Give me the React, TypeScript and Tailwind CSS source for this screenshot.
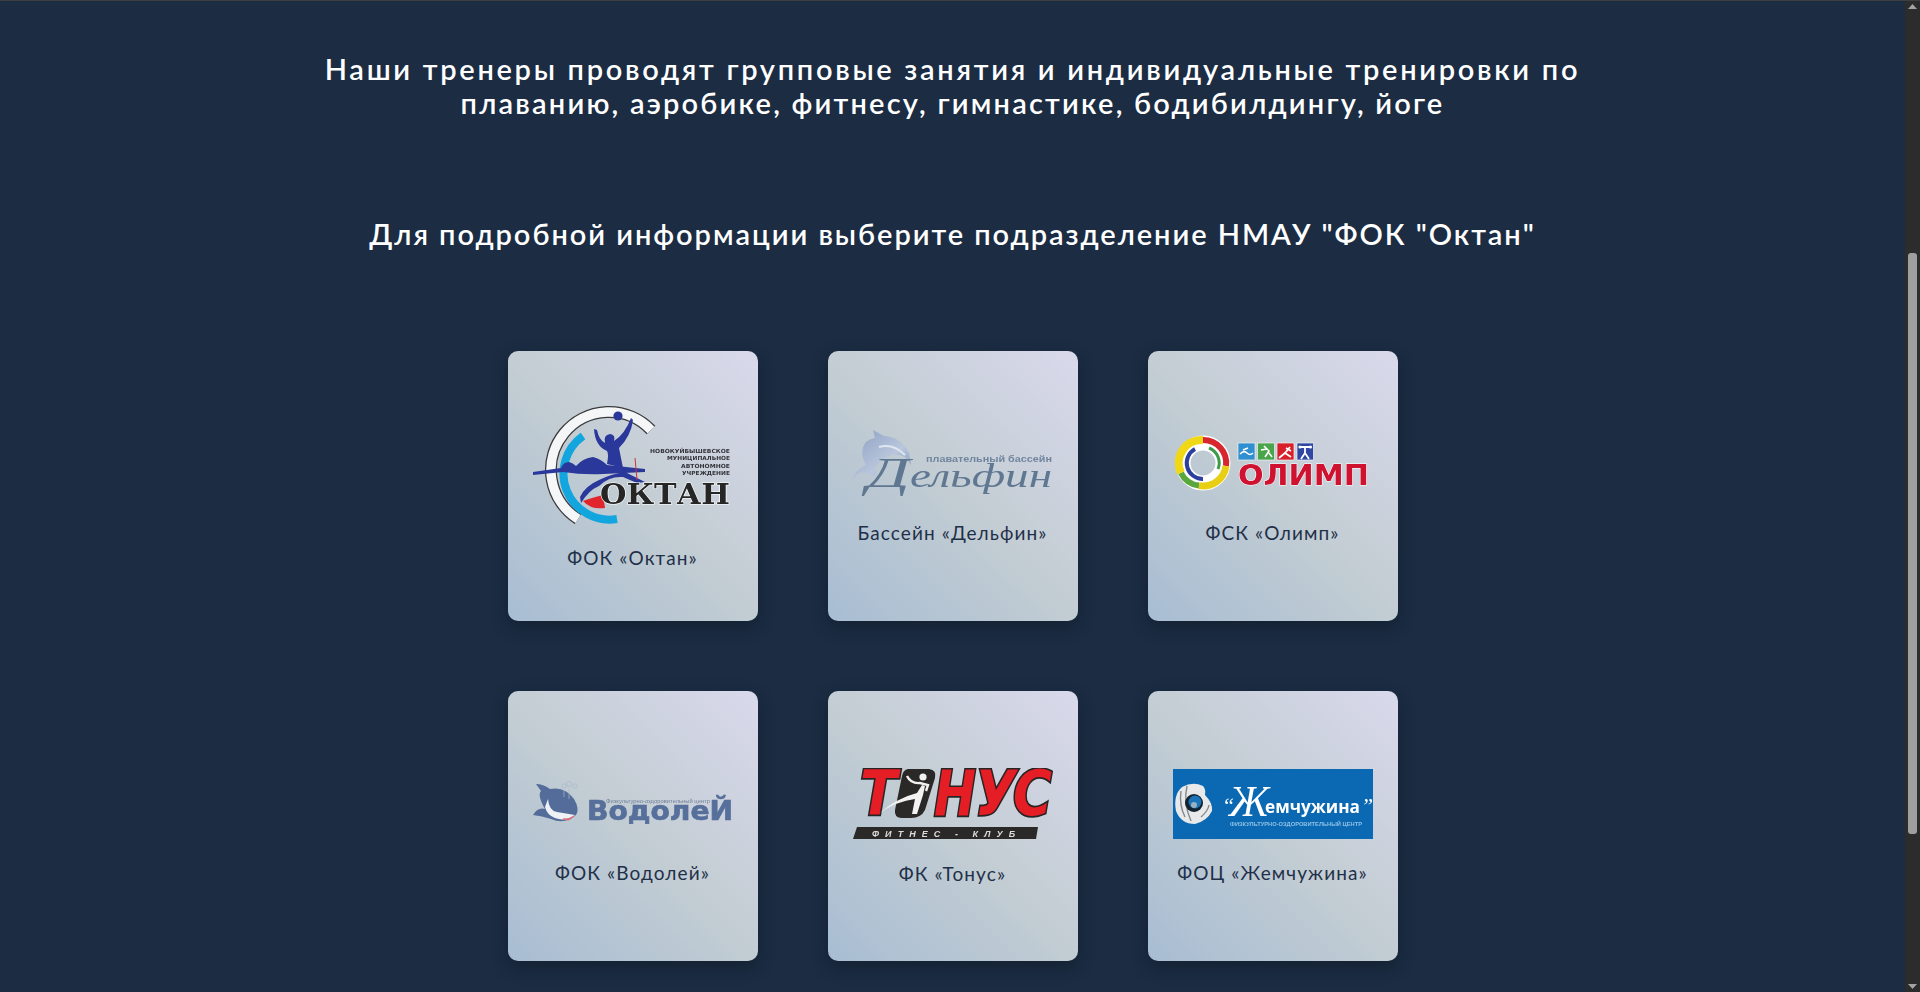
import React from 'react';

// Логотипы подразделений (в оригинале это картинки, здесь нарисованы в svg)
const LogoOktan = () => (
  <svg viewBox="0 0 200 120" className="w-[200px] h-[120px]">
    <path d="M45 115 A58 58 0 1 1 118 26" fill="none" stroke="#3a3a3a" strokeWidth="12" />
    <path d="M45 115 A58 58 0 1 1 118 26" fill="none" stroke="#f4f6f8" strokeWidth="9.5" />
    <path d="M50 32 A46 46 0 0 0 84 115" fill="none" stroke="#12a5de" strokeWidth="8" />
    <path d="M50 97 Q58 94 70 91 L72 104 Q58 106 50 97Z" fill="#e0262c" />
    <circle cx="85" cy="12" r="4.6" fill="#2b389b" />
    <path d="M0 68 L28 64 Q30 58 36 58 Q40 59 43 62 Q50 54 60 53 Q68 55 74 61 L112 65 L112 68 L70 70 Q50 71 30 68 L0 71Z" fill="#2b389b" />
    <path d="M61 25 L64 26 Q66 36 72 39 Q70 31 77 30 Q83 31 81 37 Q92 30 98 14 L100 16 Q98 32 86 44 L90 64 L74 60 Q76 50 74 47 Q62 42 61 25Z" fill="#2b389b" />
    <path d="M92 68 L112 78 L104 79 L90 73 Q76 72 66 82 Q56 86 48 99 L47 93 Q52 82 66 76 Q78 70 92 68Z" fill="#2b389b" />
    <path d="M102 54 L104 76" stroke="#d0303a" strokeWidth="1" />
    <g fontFamily="DejaVu Sans, sans-serif" fontWeight="700" fontSize="5.6" fill="#33333a" textAnchor="end">
      <text x="197" y="48.5" textLength="80" lengthAdjust="spacingAndGlyphs">НОВОКУЙБЫШЕВСКОЕ</text>
      <text x="197" y="56" textLength="63" lengthAdjust="spacingAndGlyphs">МУНИЦИПАЛЬНОЕ</text>
      <text x="197" y="63.5" textLength="49" lengthAdjust="spacingAndGlyphs">АВТОНОМНОЕ</text>
      <text x="197" y="71" textLength="48" lengthAdjust="spacingAndGlyphs">УЧРЕЖДЕНИЕ</text>
    </g>
    <text x="67" y="100" textLength="130" lengthAdjust="spacingAndGlyphs" fontFamily="DejaVu Serif, serif" fontWeight="700" fontSize="27.5" fill="#262626" stroke="#ffffff" strokeWidth="1.2" paintOrder="stroke">ОКТАН</text>
  </svg>
);

const LogoDelfin = () => (
  <svg viewBox="0 0 200 70" className="w-[200px] h-[70px]">
    <defs>
      <linearGradient id="dolphin" x1="0" y1="0" x2="1" y2="1">
        <stop offset="0" stopColor="#8b9fc2" />
        <stop offset="0.6" stopColor="#b9c6dc" />
        <stop offset="1" stopColor="#8295b8" />
      </linearGradient>
    </defs>
    <path d="M20 1 L31 7 Q48 8 56 24 L58 36 L52 28 Q44 24 36 27 Q26 31 22 40 Q26 44 20 47 Q12 42 6 44 L0 50 Q3 40 13 36 Q6 24 12 14 Q16 10 22 9Z" fill="url(#dolphin)" />
    <path d="M26 18 Q40 14 52 26" fill="none" stroke="#dfe6f0" strokeWidth="2" />
    <text x="73" y="33" textLength="126" lengthAdjust="spacingAndGlyphs" fontFamily="Liberation Sans, sans-serif" fontWeight="700" fontSize="8.5" fill="#71859f">плавательный бассейн</text>
    <g fontFamily="Liberation Serif, serif" fontStyle="italic" fill="#5f7791">
      <text x="14" y="58" textLength="43" lengthAdjust="spacingAndGlyphs" fontSize="42">Д</text>
      <text x="57" y="58" textLength="142" lengthAdjust="spacingAndGlyphs" fontSize="33">ельфин</text>
    </g>
  </svg>
);

const LogoOlimp = () => (
  <svg viewBox="0 0 200 70" className="w-[200px] h-[70px]">
    <circle cx="30" cy="34" r="20" fill="none" stroke="#ffffff" strokeWidth="15" />
    <path d="M8 44 A23 23 0 0 1 30 11" fill="none" stroke="#f1d816" strokeWidth="8" />
    <path d="M30 11 A23 23 0 0 1 53 37" fill="none" stroke="#d8262e" strokeWidth="6" />
    <path d="M53 37 A23 23 0 0 1 26 56.6" fill="none" stroke="#e9cf14" strokeWidth="7" />
    <path d="M26 56.6 A23 23 0 0 1 8 44" fill="none" stroke="#5aa83c" strokeWidth="6" />
    <path d="M22 20 A16 16 0 0 0 30 50" fill="none" stroke="#2c3f9f" strokeWidth="4" />
    <path d="M36 19 A16 16 0 0 1 45 40" fill="none" stroke="#3c9a48" strokeWidth="3" />
    <g stroke="#eef2f6" strokeWidth="0.7">
      <rect x="65" y="14" width="17" height="17" fill="#2f8fd0" />
      <rect x="84.5" y="14" width="17" height="17" fill="#4aa54a" />
      <rect x="104" y="14" width="17" height="17" fill="#d9202a" />
      <rect x="124" y="14" width="16.5" height="17" fill="#2f47a3" />
    </g>
    <path d="M67 25 Q71 21 74 24 T80 24 M70 21 L75 19" stroke="#fff" strokeWidth="1.6" fill="none" />
    <path d="M91 17 L96 22 L92 28 M88 21 L94 20 M96 24 L99 28" stroke="#fff" strokeWidth="1.6" fill="none" />
    <path d="M106 29 L112 24 L117 18 M112 24 L118 28 M113 19 L118 22" stroke="#fff" strokeWidth="1.8" fill="none" />
    <path d="M126 18 L138 18 M132 18 L132 24 L128 30 M132 24 L136 30" stroke="#fff" strokeWidth="1.8" fill="none" />
    <circle cx="127" cy="18" r="1.6" fill="#fff" />
    <circle cx="137.5" cy="18" r="1.6" fill="#fff" />
    <text x="65" y="56" textLength="131" lengthAdjust="spacingAndGlyphs" fontFamily="DejaVu Sans, sans-serif" fontWeight="700" fontSize="29" fill="#cf1230" stroke="#ffffff" strokeWidth="1" paintOrder="stroke">ОЛИМП</text>
  </svg>
);

const LogoVodoley = () => (
  <svg viewBox="0 0 200 70" className="w-[200px] h-[70px]">
    <path d="M3 15 Q10 15 17 20 Q32 17 41 30 Q47 40 43 46 Q32 56 18 50 Q9 47 0 46 Q5 38 12 40 Q4 26 8 22Z" fill="#536c99" />
    <path d="M12 38 Q14 46 22 49 Q32 53 42 46 L24 43 Q16 42 15 30Z" fill="#eef1f5" />
    <path d="M30 50 Q36 51 41 47 L36 51Z" fill="#e0707c" stroke="#e0707c" />
    <g fill="none" stroke="#aab7cd" strokeWidth="0.7">
      <circle cx="31" cy="17" r="2.2" />
      <circle cx="36" cy="15" r="2.6" />
      <circle cx="42" cy="17" r="2.2" />
      <path d="M31 28 L31 21 M36 30 L36 20" />
    </g>
    <text x="73" y="34" textLength="104" lengthAdjust="spacingAndGlyphs" fontFamily="Liberation Sans, sans-serif" fontSize="4.6" fill="#6f7f9a">Физкультурно-оздоровительный центр</text>
    <text x="54" y="51" textLength="146" lengthAdjust="spacingAndGlyphs" fontFamily="DejaVu Sans, sans-serif" fontWeight="700" fontSize="27" fill="#566f9b" stroke="#566f9b" strokeWidth="0.7">ВодолеЙ</text>
  </svg>
);

const LogoTonus = () => (
  <svg viewBox="0 0 200 72" className="w-[200px] h-[72px]">
    <g fontFamily="DejaVu Sans, sans-serif" fontWeight="700" fontStyle="italic" fontSize="62" fill="#e51d25" stroke="#262424" strokeWidth="3.4" paintOrder="stroke">
      <text x="7" y="47" textLength="37" lengthAdjust="spacingAndGlyphs">Т</text>
      <text x="81" y="47" textLength="42" lengthAdjust="spacingAndGlyphs">Н</text>
      <text x="122" y="47" textLength="41" lengthAdjust="spacingAndGlyphs">У</text>
      <text x="160" y="47" textLength="39" lengthAdjust="spacingAndGlyphs">С</text>
    </g>
    <path d="M55 1 L76 1 Q84 2 82 10 L72 42 Q68 50 58 50 L48 50 Q41 49 42 42 L49 8 Q50 2 55 1Z" fill="#2b2927" />
    <circle cx="70" cy="9" r="3.6" fill="#f2f2f2" />
    <path d="M27 45 Q44 30 64 25 L69 17 L72 18 L70 27 L64 46 L59 46 L62 31 Q44 33 27 45Z" fill="#f2f2f2" />
    <path d="M54 8 Q58 16 67 15 L75 17 L73 23" fill="none" stroke="#f2f2f2" strokeWidth="2.4" />
    <path d="M4 59 L185 59 L183 71 L0 71Z" fill="#2b2927" />
    <text x="19" y="69" textLength="143" fontFamily="Liberation Sans, sans-serif" fontWeight="700" fontStyle="italic" fontSize="9" fill="#dcdcdc">ФИТНЕС - КЛУБ</text>
  </svg>
);

const LogoPearl = () => (
  <svg viewBox="0 0 200 70" className="w-[200px] h-[70px]">
    <rect width="200" height="70" fill="#0b69b3" />
    <path d="M9 18 Q20 12 30 17 Q33 20 32 26 Q40 34 39 42 Q34 52 22 55 Q8 55 3 42 Q0 26 9 18Z" fill="#e7e9ea" />
    <path d="M8 22 Q6 36 12 48 M14 17 Q10 34 18 52 M28 48 Q35 42 36 36" fill="none" stroke="#84888c" strokeWidth="1.4" />
    <circle cx="21" cy="34" r="9" fill="#14212e" />
    <circle cx="22" cy="33" r="6.5" fill="#1a74b9" />
    <circle cx="21" cy="36" r="3" fill="#9cb0bf" />
    <g fontFamily="Liberation Serif, serif" fontStyle="italic" fill="#ffffff">
      <text x="49" y="44" fontSize="22">“</text>
      <text x="56" y="47" fontSize="44" textLength="40" lengthAdjust="spacingAndGlyphs">Ж</text>
      <text x="188" y="44" fontSize="22">”</text>
    </g>
    <text x="92" y="44" textLength="95" lengthAdjust="spacingAndGlyphs" fontFamily="Open Sans, sans-serif" fontWeight="700" fontSize="18" fill="#ffffff">емчужина</text>
    <text x="57" y="56.5" textLength="132" lengthAdjust="spacingAndGlyphs" fontFamily="Liberation Sans, sans-serif" fontWeight="700" fontSize="5.6" fill="#8fc0e6">ФИЗКУЛЬТУРНО-ОЗДОРОВИТЕЛЬНЫЙ ЦЕНТР</text>
  </svg>
);

const units = [
  { title: 'ФОК «Октан»', Logo: LogoOktan },
  { title: 'Бассейн «Дельфин»', Logo: LogoDelfin },
  { title: 'ФСК «Олимп»', Logo: LogoOlimp },
  { title: 'ФОК «Водолей»', Logo: LogoVodoley },
  { title: 'ФК «Тонус»', Logo: LogoTonus },
  { title: 'ФОЦ «Жемчужина»', Logo: LogoPearl },
];

export default function App() {
  return (
    <div className="flex h-[992px] overflow-hidden border-t border-[#3f3f3f] bg-[#1b2c43] font-['Lato',sans-serif]">
      <main className="flex-1 text-white">
        <h2 className="mt-[51px] text-center text-[29px] font-semibold leading-[34px] tracking-[2.2px]">
          <span className="tracking-[2.7px]">Наши тренеры проводят групповые занятия и индивидуальные тренировки по</span>
          <br />
          плаванию, аэробике, фитнесу, гимнастике, бодибилдингу, йоге
        </h2>
        <h2 className="mt-[97px] text-center text-[29px] font-semibold leading-[34px] tracking-[1.95px]">
          Для подробной информации выберите подразделение НМАУ "ФОК "Октан"
        </h2>

        <div className="mt-[100px] grid grid-cols-[repeat(3,250px)] justify-center gap-[70px]">
          {units.map(({ title, Logo }) => (
            <a
              key={title}
              className="flex h-[270px] flex-col items-center justify-center rounded-[10px] bg-[linear-gradient(45deg,#a8bdd3_0%,#c3cdd3_50%,#d9d9ec_100%)] shadow-[0_6px_18px_rgba(0,0,0,0.28)]"
            >
              <div className="blur-[0.35px]">
                <Logo />
              </div>
              <p className="mt-[23px] text-[19px] leading-[22px] tracking-[1.1px] text-[#1f3048]">{title}</p>
            </a>
          ))}
        </div>
      </main>

      {/* Полоса прокрутки */}
      <aside className="flex w-[15px] flex-col items-center bg-[#2c2c2c]">
        <svg viewBox="0 0 9 5" className="mt-[3px] h-[5px] w-[9px]">
          <path d="M4.5 0 L9 5 L0 5Z" fill="#a3a3a3" />
        </svg>
        <div className="mt-[244px] h-[581px] w-[9px] rounded-[3px] bg-[#9f9f9f]" />
        <svg viewBox="0 0 9 5" className="mt-auto mb-[3px] h-[5px] w-[9px]">
          <path d="M0 0 L9 0 L4.5 5Z" fill="#a3a3a3" />
        </svg>
      </aside>
    </div>
  );
}
